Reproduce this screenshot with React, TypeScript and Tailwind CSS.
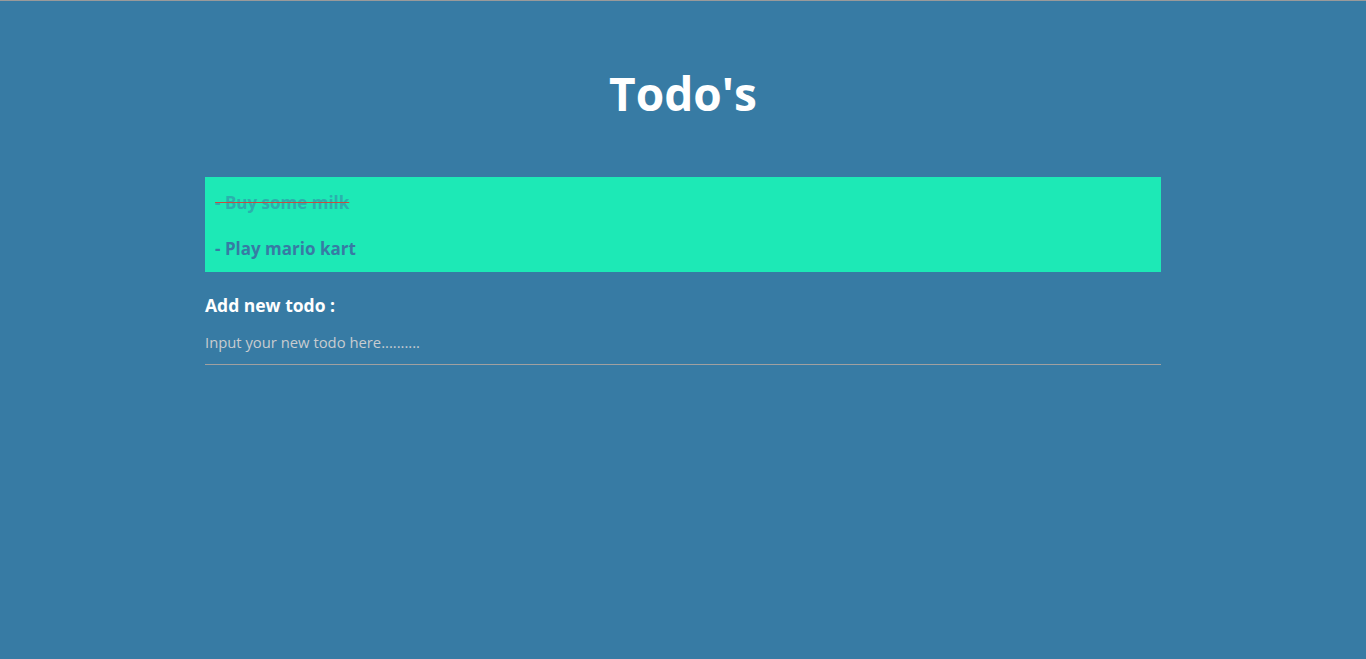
import React from "react";

export default function App() {
  return (
    <div
      className="min-h-[659px] w-full bg-[#377ba4] border-t border-[#9a9a9a]"
      style={{ fontFamily: '"Open Sans", "Noto Sans", sans-serif' }}
    >
      <h1 className="pt-[52px] text-center text-[46px] font-bold leading-[80px] text-white">
        Todo's
      </h1>
      <div className="mx-auto mt-[44px] w-[956px]">
        <div className="flex flex-col bg-[#1de9b6] pt-[3px] pb-px">
          <div className="flex h-[46px] items-center px-[10px] text-[17px] font-bold text-[#2bb0ad] line-through decoration-[#c5503f]">
            - Buy some milk
          </div>
          <div className="flex h-[45px] items-center px-[10px] text-[17px] font-bold text-[#377ba4]">
            - Play mario kart
          </div>
        </div>
        <form className="mt-[20px] flex flex-col">
          <label className="text-[17.5px] font-bold leading-[26px] text-white">Add new todo :</label>
          <input
            type="text"
            placeholder="Input your new todo here.........."
            className="mt-[6px] h-[41px] w-full border-b border-[#a0a0a0] bg-transparent pb-[5px] text-[14.8px] text-white outline-none placeholder:text-[#c8ccd0]"
          />
        </form>
      </div>
    </div>
  );
}
